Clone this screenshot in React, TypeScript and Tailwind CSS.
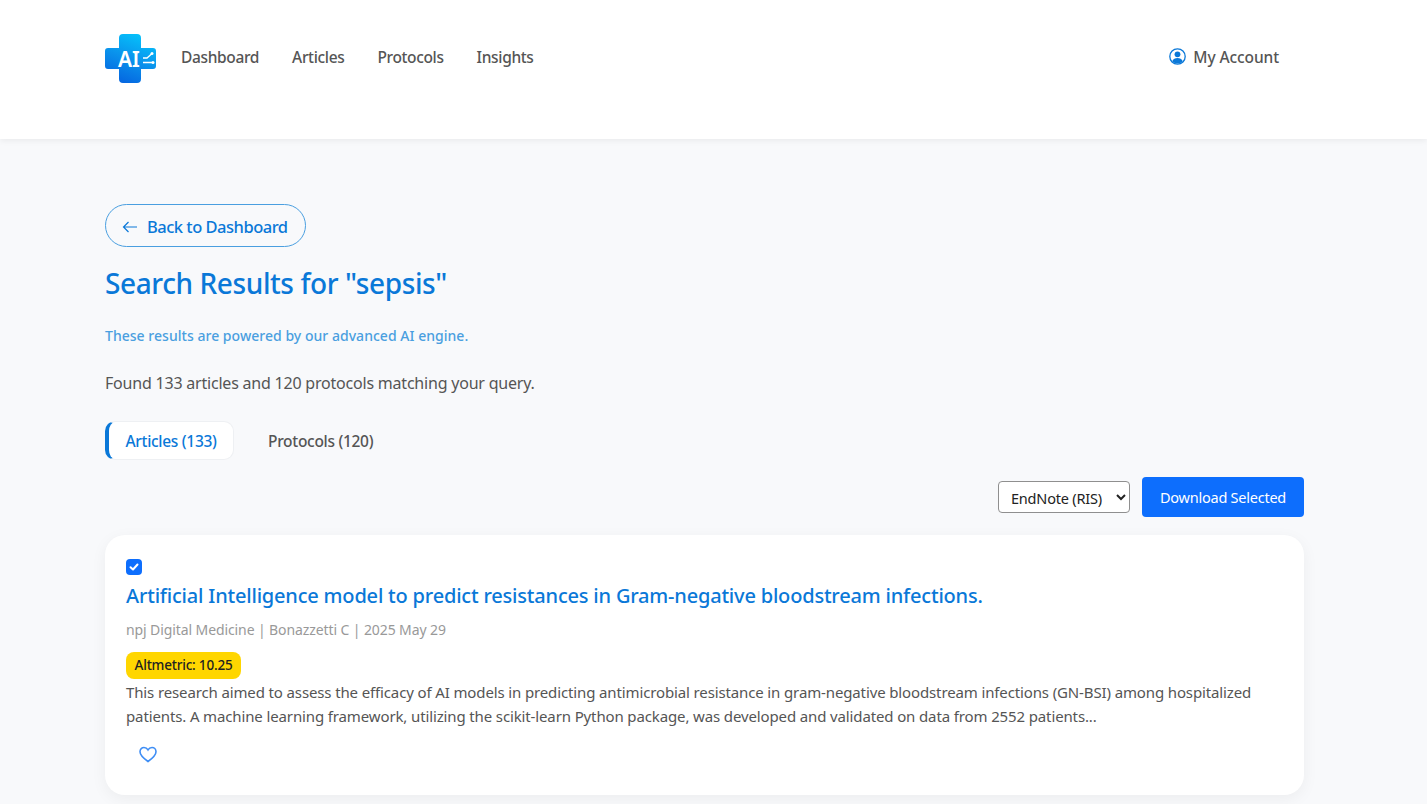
import React from "react";

const FONT = "font-['Noto_Sans',sans-serif]";

function Logo() {
  return (
    <svg width="52" height="50" viewBox="0 0 52 50" className="block">
      <defs>
        <linearGradient id="lg" x1="0.7" y1="0" x2="0.3" y2="1">
          <stop offset="0" stopColor="#05c3fb" />
          <stop offset="0.5" stopColor="#0a93ec" />
          <stop offset="1" stopColor="#0565e0" />
        </linearGradient>
      </defs>
      <path
        d="M18 0h14a4 4 0 0 1 4 4v10h12a3 3 0 0 1 3 3v15a3 3 0 0 1-3 3H36v10a4 4 0 0 1-4 4H18a4 4 0 0 1-4-4V35H3a3 3 0 0 1-3-3V17a3 3 0 0 1 3-3h11V4a4 4 0 0 1 4-4z"
        fill="url(#lg)"
      />
      <text x="13" y="33" fill="#fff" fontSize="21" fontWeight="600" fontFamily="Noto Sans, sans-serif">AI</text>
      <path d="M38 24h4l4.500-4M38 28.500h9.500" stroke="#fff" strokeWidth="1.300" fill="none" />
      <circle cx="47" cy="19.500" r="1.500" fill="#fff" />
      <circle cx="48" cy="28.500" r="1.500" fill="#fff" />
    </svg>
  );
}

export default function App() {
  return (
    <div className={`${FONT} min-h-[804px] h-[804px] overflow-hidden bg-[#f8f9fb] text-[#444]`}>
      <header className="h-[139px] bg-white shadow-[0_2px_6px_rgba(0,0,0,0.06)] pl-[105px] pr-[148px] pt-[34px] flex items-start justify-between">
        <div className="flex items-start">
          <Logo />
          <nav className="ml-[24px] flex gap-[33px] pt-[9px] text-[15.500px] leading-[28px] font-medium text-[#555] tracking-[-0.35px]">
            <span>Dashboard</span>
            <span>Articles</span>
            <span>Protocols</span>
            <span>Insights</span>
          </nav>
        </div>
        <div className="flex items-center gap-[7px] pt-[9px] text-[15.500px] leading-[28px] font-medium text-[#555] tracking-[-0.1px]">
          <svg width="17" height="17" viewBox="0 0 17 17" className="-mt-[2px]">
            <circle cx="8.500" cy="8.500" r="7.700" fill="none" stroke="#0a78d8" strokeWidth="1.300" />
            <circle cx="8.500" cy="6.300" r="2.900" fill="#0a78d8" />
            <path d="M3.200 13.200c1-2.400 3-3.200 5.300-3.200s4.300.8 5.300 3.200a7.500 7.500 0 0 1-10.600 0z" fill="#0a78d8" />
          </svg>
          <span>My Account</span>
        </div>
      </header>

      <main className="pl-[105px] pr-[123px] pt-[65px]">
        <button className="flex items-center h-[43px] w-[201px] rounded-full border border-[#4a9fe0] pl-[16px] pt-[3px] text-[#0a78d8] text-[16.500px] font-medium tracking-[-0.5px]">
          <svg width="16" height="12" viewBox="0 0 16 12" className="mr-[9px]">
            <path d="M15 6H1.500M6.500 1 1.500 6l5 5" fill="none" stroke="#0a78d8" strokeWidth="1.200" />
          </svg>
          Back to Dashboard
        </button>

        <h1 className="mt-[14px] text-[28px] leading-[44px] font-medium text-[#0a78d8] tracking-[-0.4px]">
          Search Results for "sepsis"
        </h1>

        <p className="mt-[19px] text-[14px] leading-[24px] font-medium text-[#4a9fe0] tracking-[0.03px]">
          These results are powered by our advanced AI engine.
        </p>

        <p className="mt-[23px] text-[16px] leading-[24px] text-[#555] tracking-[-0.21px]">
          Found 133 articles and 120 protocols matching your query.
        </p>

        <div className="mt-[26px] flex items-center">
          <div className="h-[39px] w-[129px] rounded-[10px] border border-[#eef0f3] border-l-[4px] border-l-[#0a78d8] bg-white pt-[2px] flex items-center justify-center text-[15.500px] font-medium text-[#0a78d8] tracking-[-0.3px]">
            Articles (133)
          </div>
          <div className="ml-[34px] pt-[2px] text-[15.500px] font-medium text-[#555] tracking-[-0.3px]">Protocols (120)</div>
        </div>

        <div className="mt-[17px] flex items-center justify-end gap-[12px]">
          <select
            defaultValue="ris"
            className="h-[32px] w-[132px] rounded-[4px] border border-[#8f8f8f] bg-white pl-[8px] pt-[2px] text-[14.500px] text-[#222] tracking-[-0.2px]"
          >
            <option value="ris">EndNote (RIS)</option>
          </select>
          <button className="h-[40px] w-[162px] rounded-[4px] bg-[#0d6efd] pt-[2px] text-white text-[14.500px] tracking-[-0.24px]">
            Download Selected
          </button>
        </div>

        <article className="mt-[18px] h-[260px] rounded-[20px] bg-white shadow-[0_4px_16px_rgba(0,0,0,0.05)] pl-[21px] pr-[21px] pt-[24px]">
          <div className="w-[16px] h-[16px] rounded-[4px] bg-[#0d6efd] flex items-center justify-center">
            <svg width="12" height="12" viewBox="0 0 12 12">
              <path d="M2.500 6.200 5 8.500l4.500-5" fill="none" stroke="#fff" strokeWidth="2" strokeLinecap="round" strokeLinejoin="round" />
            </svg>
          </div>
          <h2 className="mt-[5px] text-[20px] leading-[32px] font-medium text-[#0a78d8] tracking-[-0.195px]">
            Artificial Intelligence model to predict resistances in Gram-negative bloodstream infections.
          </h2>
          <p className="mt-[6px] text-[14px] leading-[24px] text-[#999] tracking-[-0.1px]">
            npj Digital Medicine | Bonazzetti C | 2025 May 29
          </p>
          <div className="mt-[10px] h-[27px] w-[115px] rounded-[8px] bg-[#ffd600] flex items-center justify-center text-[13.500px] font-medium text-[#222] tracking-[-0.2px]">
            Altmetric: 10.25
          </div>
          <p className="mt-[1px] text-[15px] leading-[24px] text-[#555] tracking-[-0.13px]">
            This research aimed to assess the efficacy of AI models in predicting antimicrobial resistance in gram-negative bloodstream infections (GN-BSI) among hospitalized patients. A machine learning framework, utilizing the scikit-learn Python package, was developed and validated on data from 2552 patients...
          </p>
          <div className="mt-[18px] ml-[13px]">
            <svg width="18" height="17" viewBox="0 0 18 17">
              <path d="M9 15.500C3.500 11.500 1 9 1 5.700 1 3.200 2.900 1.500 5 1.500c1.700 0 3.100.9 4 2.400.9-1.500 2.300-2.400 4-2.400 2.100 0 4 1.700 4 4.200 0 3.300-2.500 5.800-8 9.800z" fill="none" stroke="#3f8ef5" strokeWidth="1.600" />
            </svg>
          </div>
        </article>
      </main>
    </div>
  );
}
